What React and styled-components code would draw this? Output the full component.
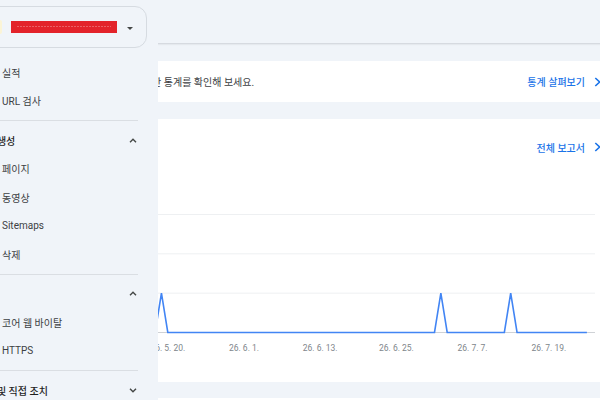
import React from "react";
import styled, { createGlobalStyle } from "styled-components";

const GlobalStyle = createGlobalStyle`
  html, body { margin: 0; padding: 0; }
  body {
    background: #f0f4f9;
    font-family: Roboto, "Noto Sans CJK KR", sans-serif;
  }
  #root { width: 600px; height: 400px; overflow: hidden; }
`;

const Shell = styled.div`
  display: flex;
  width: 600px;
  height: 400px;
  overflow: hidden;
  background: #f0f4f9;
`;

/* ---------- sidebar ---------- */

const Sidebar = styled.aside`
  width: 158px;
  flex-shrink: 0;
  overflow: hidden;
  display: flex;
  flex-direction: column;
`;

const PickerRow = styled.div`
  padding-top: 6px;
`;

const Picker = styled.div`
  height: 42px;
  box-sizing: border-box;
  margin: 0 11px 0 -30px;
  padding: 0 13px 0 18px;
  border: 1px solid #d6dbe1;
  border-radius: 12px;
  display: flex;
  align-items: center;
`;

const Favicon = styled.span`
  width: 13px;
  height: 14px;
  border-radius: 2px;
  background: #fbf4d6;
  flex-shrink: 0;
`;

const SiteName = styled.span`
  position: relative;
  margin-left: 9px;
  width: 106px;
  height: 12px;
  background: #e3232a;
  flex-shrink: 0;
  &::after {
    content: "";
    position: absolute;
    left: 6px;
    right: 6px;
    top: 5px;
    height: 1px;
    background: repeating-linear-gradient(90deg, rgba(255,255,255,0.28) 0 2px, transparent 2px 3px);
  }
`;

const Caret = styled.span`
  margin-left: auto;
  width: 0;
  height: 0;
  border-left: 3px solid transparent;
  border-right: 3px solid transparent;
  border-top: 3px solid #444746;
  margin-top: 2px;
`;

const Nav = styled.nav`
  margin: 9.75px 20px 0 -30px;
  display: flex;
  flex-direction: column;
`;

const NavItem = styled.div`
  height: 28.5px;
  flex-shrink: 0;
  display: flex;
  align-items: center;
  padding-left: 32px;
  font-size: 10px;
  color: #3c4043;
  white-space: nowrap;
`;

const SectionHeader = styled.div`
  height: 28.5px;
  flex-shrink: 0;
  display: flex;
  align-items: center;
  justify-content: space-between;
  padding: 0 1px 0 6px;
  font-size: 10px;
  font-weight: 500;
  color: #1f1f1f;
  white-space: nowrap;
`;

const Divider = styled.div`
  height: 1px;
  flex-shrink: 0;
  background: #dadee3;
  margin: 5.5px 0 4.5px;
`;

const Chevron = ({ open }) => (
  <svg width="8" height="5" viewBox="0 0 8 5" fill="none">
    <path
      d={open ? "M1 4.2 L4 1.2 L7 4.2" : "M1 0.8 L4 3.8 L7 0.8"}
      stroke="#444746"
      strokeWidth="1.4"
    />
  </svg>
);

/* ---------- main column ---------- */

const Main = styled.main`
  flex: 1;
  min-width: 0;
  overflow: hidden;
  display: flex;
  flex-direction: column;
`;

const TopBar = styled.header`
  height: 43px;
  flex-shrink: 0;
  border-bottom: 1px solid #d6dae0;
  box-shadow: 0 1px 1px rgba(60, 64, 67, 0.06);
`;

const Content = styled.div`
  margin-left: -222px;
  width: 676px;
  flex-shrink: 0;
  padding-top: 17px;
  display: flex;
  flex-direction: column;
  gap: 16.5px;
`;

const Banner = styled.section`
  height: 41px;
  flex-shrink: 0;
  box-sizing: border-box;
  background: #fff;
  display: flex;
  align-items: center;
  justify-content: space-between;
  padding: 0 11px 0 17px;
`;

const BannerText = styled.span`
  font-size: 10px;
  color: #3c4043;
  white-space: nowrap;
`;

const LinkButton = styled.a`
  display: flex;
  align-items: center;
  gap: 9px;
  font-size: 10px;
  font-weight: 500;
  color: #1a73e8;
  text-decoration: none;
  white-space: nowrap;
`;

const Card = styled.section`
  height: ${(p) => p.$h}px;
  flex-shrink: 0;
  box-sizing: border-box;
  background: #fff;
  padding-top: ${(p) => p.$pt || 0}px;
  display: flex;
  flex-direction: column;
`;

const CardHead = styled.div`
  height: 20px;
  flex-shrink: 0;
  display: flex;
  align-items: center;
  justify-content: space-between;
  padding: 0 11px 0 17px;
`;

const CardTitle = styled.h2`
  margin: 0;
  font-size: 11px;
  font-weight: 500;
  color: #1f1f1f;
`;

const ChartBox = styled.div`
  margin: 3px 17px 0;
  height: 200px;
  flex-shrink: 0;
`;

const ArrowRight = () => (
  <svg width="7" height="10" viewBox="0 0 7 10" fill="none">
    <path d="M1.3 1 L5.6 5 L1.3 9" stroke="#1a73e8" strokeWidth="1.6" />
  </svg>
);

/* ---------- chart ---------- */

const CHART_W = 642;
const DAY = 6.35;
const X0 = 214.8; // x of 26. 5. 20.
const BASE = 172.5;
const STEP = 39.33;
const spikes = new Set([-1, 43, 54]);

const dayLabel = (d) => {
  const dt = new Date(2026, 4, 20 + d);
  return `${String(dt.getFullYear()).slice(2)}. ${dt.getMonth() + 1}. ${dt.getDate()}.`;
};

const ClicksChart = () => {
  const pts = [];
  for (let d = -33; d <= 66; d++) {
    const v = spikes.has(d) ? 1 : 0;
    pts.push(`${(X0 + d * DAY).toFixed(2)},${(BASE - v * STEP).toFixed(2)}`);
  }
  const ticks = [0, 12, 24, 36, 48, 60];
  return (
    <svg width={CHART_W} height="200" viewBox={`0 0 ${CHART_W} 200`}>
      {[1, 2, 3].map((i) => (
        <line
          key={i}
          x1="0"
          x2={CHART_W}
          y1={BASE - i * STEP}
          y2={BASE - i * STEP}
          stroke="#eef0f2"
          strokeWidth="1"
        />
      ))}
      <line x1="0" x2={CHART_W} y1={BASE} y2={BASE} stroke="#cfd2d6" strokeWidth="1.2" />
      <polyline
        points={pts.join(" ")}
        fill="none"
        stroke="#4285f4"
        strokeWidth="1.6"
        strokeLinejoin="miter"
      />
      {ticks.map((d) => (
        <text
          key={d}
          x={X0 + d * DAY}
          y="190.5"
          textAnchor="middle"
          fontSize="8.5"
          fontFamily="Roboto, sans-serif"
          fill="#80868b"
        >
          {dayLabel(d)}
        </text>
      ))}
    </svg>
  );
};

export default function App() {
  return (
    <>
      <GlobalStyle />
      <Shell>
        <Sidebar>
          <PickerRow>
            <Picker>
              <Favicon />
              <SiteName />
              <Caret />
            </Picker>
          </PickerRow>
          <Nav>
            <NavItem>실적</NavItem>
            <NavItem>URL 검사</NavItem>
            <Divider />
            <SectionHeader>
              <span>색인 생성</span>
              <Chevron open />
            </SectionHeader>
            <NavItem>페이지</NavItem>
            <NavItem>동영상</NavItem>
            <NavItem>Sitemaps</NavItem>
            <NavItem>삭제</NavItem>
            <Divider />
            <SectionHeader>
              <span>환경</span>
              <Chevron open />
            </SectionHeader>
            <NavItem>코어 웹 바이탈</NavItem>
            <NavItem>HTTPS</NavItem>
            <Divider />
            <SectionHeader>
              <span>보안 및 직접 조치</span>
              <Chevron />
            </SectionHeader>
          </Nav>
        </Sidebar>
        <Main>
          <TopBar />
          <Content>
            <Banner>
              <BannerText>
                Search Console 인사이트에서 사이트 실적에 관한 통계를 확인해 보세요.
              </BannerText>
              <LinkButton href="#">
                통계 살펴보기
                <ArrowRight />
              </LinkButton>
            </Banner>
            <Card $h={263} $pt={18.5}>
              <CardHead>
                <CardTitle>실적</CardTitle>
                <LinkButton href="#">
                  전체 보고서
                  <ArrowRight />
                </LinkButton>
              </CardHead>
              <ChartBox>
                <ClicksChart />
              </ChartBox>
            </Card>
            <Card $h={40} />
          </Content>
        </Main>
      </Shell>
    </>
  );
}
